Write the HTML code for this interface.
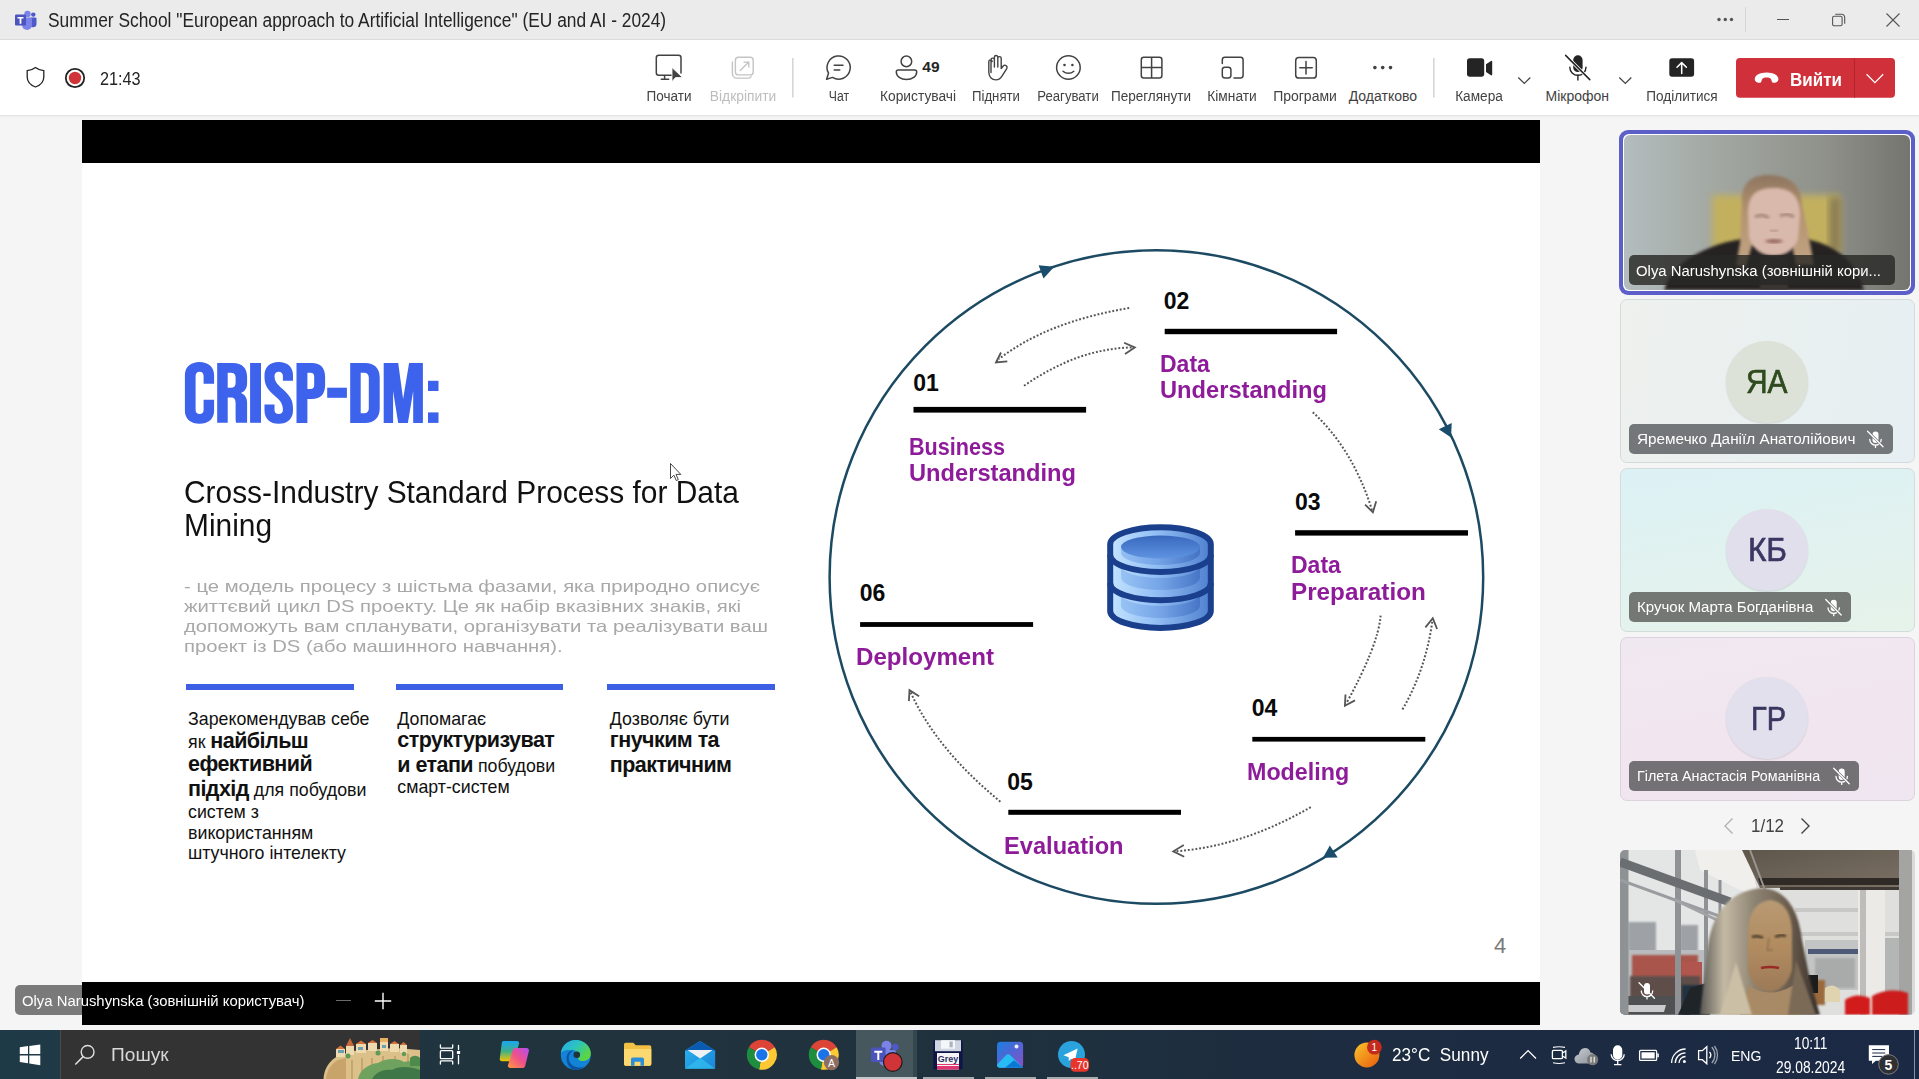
<!DOCTYPE html>
<html><head><meta charset="utf-8">
<style>
*{margin:0;padding:0;box-sizing:border-box}
html,body{width:1919px;height:1079px;overflow:hidden;background:#f5f5f5;font-family:"Liberation Sans",sans-serif;position:relative}
.a{position:absolute}
.t{position:absolute;white-space:nowrap;line-height:1}
svg{position:absolute;overflow:visible}
/* title bar */
#titlebar{left:0;top:0;width:1919px;height:40px;background:#ebebeb;border-bottom:1px solid #dcdcdc}
#toolbar{left:0;top:40px;width:1919px;height:76px;background:#fff;border-bottom:1px solid #e3e3e3}
.lbl{position:absolute;font-size:14px;color:#424242;white-space:nowrap;line-height:1;text-align:center}
</style></head><body>
<!-- TITLE BAR -->
<div id="titlebar" class="a"></div>
<svg style="left:15px;top:10px" width="22" height="20" viewBox="0 0 22 20">
  <circle cx="12.5" cy="4" r="3.2" fill="#7b83eb"/>
  <circle cx="18.3" cy="4.6" r="2.2" fill="#5059c9"/>
  <path d="M15.5 7.5h5a1 1 0 0 1 1 1v5.2a3.5 3.5 0 0 1-3.5 3.5h-.2a3.3 3.3 0 0 1-3.3-3.3z" fill="#5059c9"/>
  <path d="M8 7.5h8a1 1 0 0 1 1 1v6.5a5 5 0 0 1-10 0z" fill="#7b83eb"/>
  <rect x="0" y="4.5" width="11" height="11" rx="1" fill="#4b53bc"/>
  <path d="M2.5 7h6v1.6H6.4v5.2H4.6V8.6H2.5z" fill="#fff"/>
</svg>
<div class="t" style="left:48px;top:10.5px;font-size:19.5px;color:#242424;transform:scaleX(.89);transform-origin:0 0">Summer School "European approach to Artificial Intelligence" (EU and AI - 2024)</div>
<svg style="left:1717px;top:16px" width="20" height="8"><circle cx="2" cy="3.5" r="1.7" fill="#555"/><circle cx="8.3" cy="3.5" r="1.7" fill="#555"/><circle cx="14.5" cy="3.5" r="1.7" fill="#555"/></svg>
<div class="a" style="left:1745px;top:7px;width:1px;height:25px;background:#d6d6d6"></div>
<div class="a" style="left:1777px;top:19px;width:12px;height:1px;background:#555"></div>
<svg style="left:1832px;top:13px" width="14" height="14" viewBox="0 0 14 14"><rect x="0.6" y="3.2" width="9.5" height="9.5" rx="1.5" fill="none" stroke="#555" stroke-width="1.1"/><path d="M3.2 1.2h6.5a3 3 0 0 1 3 3v6.5" fill="none" stroke="#555" stroke-width="1.1"/></svg>
<svg style="left:1886px;top:13px" width="14" height="14" viewBox="0 0 14 14"><path d="M0.5 0.5L13.5 13.5M13.5 0.5L0.5 13.5" stroke="#555" stroke-width="1.1"/></svg>
<!-- TOOLBAR -->
<div id="toolbar" class="a"></div>
<div class="a" style="left:0;top:116px;width:1919px;height:2px;background:linear-gradient(#ececec,#f5f5f5)"></div>
<svg style="left:0;top:0" width="1919" height="115" viewBox="0 0 1919 115">
 <g fill="none" stroke="#242424" stroke-width="1.3">
  <!-- shield -->
  <path d="M35.5 67.5c-2.6 2-5.4 3-8.3 3.2v6.3c0 4.4 2.9 8 8.3 10 5.4-2 8.3-5.6 8.3-10v-6.3c-2.9-.2-5.7-1.2-8.3-3.2z"/>
 </g>
 <circle cx="75" cy="78" r="9.2" fill="none" stroke="#242424" stroke-width="1.8"/>
 <circle cx="75" cy="78" r="6.2" fill="#d13438"/>
 <!-- Почати -->
 <g fill="none" stroke="#424242" stroke-width="1.5" stroke-linecap="round">
  <path d="M672 75.2h-13.2a2.5 2.5 0 0 1-2.5-2.5v-15a2.5 2.5 0 0 1 2.5-2.5h19.7a2.5 2.5 0 0 1 2.5 2.5v15.3"/>
  <path d="M664.6 75.5v3.8M661.3 79.3h7.4"/>
 </g>
 <path d="M672 67.6v14l3.5-4 7-.2z" fill="#424242" stroke="#fff" stroke-width="0.8"/>
 <!-- Відкріпити -->
 <g fill="none" stroke="#c4c4c4" stroke-width="1.4" stroke-linecap="round">
  <rect x="735.4" y="57.3" width="17.8" height="17.6" rx="3"/>
  <path d="M732.4 62v11.5a4.6 4.6 0 0 0 4.6 4.6h11.5a3 3 0 0 0 2.6-1.6"/>
  <path d="M740.2 70.6l8.6-8.5M744 62.1h4.8v4.8"/>
 </g>
 <rect x="792" y="58" width="1.6" height="39.5" fill="#d6d6d6"/>
 <rect x="1433" y="58" width="1.6" height="39.5" fill="#d6d6d6"/>
 <!-- Чат -->
 <g fill="none" stroke="#424242" stroke-width="1.5" stroke-linecap="round">
  <path d="M828.5 73.2a11.6 11.6 0 1 1 4 4.2l-5.9 1.8z" stroke-linejoin="round"/>
  <path d="M834.2 65.2h8.8M834.2 70h5.6"/>
 </g>
 <!-- Користувачі -->
 <g fill="none" stroke="#424242" stroke-width="1.5">
  <circle cx="906.4" cy="61.4" r="5.3"/>
  <path d="M898.2 70h16.6a1.9 1.9 0 0 1 1.9 1.9c0 4.4-4.5 7.6-10.2 7.6s-10.2-3.2-10.2-7.6a1.9 1.9 0 0 1 1.9-1.9z"/>
 </g>
 <!-- hand -->
 <g fill="none" stroke="#424242" stroke-width="1.4" stroke-linejoin="round" stroke-linecap="round">
  <path d="M991 72.5V59.8a1.7 1.7 0 0 1 3.4 0v7.2M994.4 67V57.2a1.7 1.7 0 0 1 3.4 0V67M997.8 67V58.3a1.7 1.7 0 0 1 3.4 0V68.6l2-2.6a2.2 2.2 0 0 1 3.7 2.3l-4.6 7.3c-1.4 2.3-3.4 4.3-6.3 4.3-4.4 0-7.2-3.4-7.2-7.6V61.6a1.7 1.7 0 0 1 3.4 0"/>
 </g>
 <!-- smiley -->
 <g fill="none" stroke="#424242" stroke-width="1.5">
  <circle cx="1068.4" cy="67.5" r="11.8"/>
  <path d="M1063 71.2c3 2.8 7.8 2.8 10.8 0" stroke-linecap="round"/>
 </g>
 <circle cx="1064.5" cy="65" r="1.3" fill="#424242"/><circle cx="1072.4" cy="65" r="1.3" fill="#424242"/>
 <!-- grid -->
 <g fill="none" stroke="#424242" stroke-width="1.5">
  <rect x="1141.3" y="57.3" width="20.6" height="20.6" rx="2.5"/>
  <path d="M1151.6 57.3v20.6M1141.3 67.6h20.6"/>
 </g>
 <!-- rooms -->
 <g fill="none" stroke="#424242" stroke-width="1.5" stroke-linecap="round">
  <path d="M1222.3 63.5v-3.6a2.6 2.6 0 0 1 2.6-2.6h15.6a2.6 2.6 0 0 1 2.6 2.6v15.4a2.6 2.6 0 0 1-2.6 2.6h-6.5"/>
  <rect x="1222.3" y="67.2" width="8.6" height="10.7" rx="2.6"/>
 </g>
 <!-- apps -->
 <g fill="none" stroke="#424242" stroke-width="1.5" stroke-linecap="round">
  <rect x="1295.7" y="57.5" width="20.6" height="20.6" rx="3.2"/>
  <path d="M1306 61.5v12.4M1299.8 67.7h12.4"/>
 </g>
 <circle cx="1374.9" cy="67.6" r="1.8" fill="#424242"/><circle cx="1382.7" cy="67.6" r="1.8" fill="#424242"/><circle cx="1390.5" cy="67.6" r="1.8" fill="#424242"/>
 <!-- camera -->
 <rect x="1467" y="58.2" width="17.2" height="18.6" rx="2.8" fill="#242424"/>
 <path d="M1486 64.2l5-3.3a.8.8 0 0 1 1.2.7v13a.8.8 0 0 1-1.2.6l-5-3.2z" fill="#242424"/>
 <path d="M1518.3 77.5l6 6 6-6" fill="none" stroke="#424242" stroke-width="1.2"/>
 <!-- mic off -->
 <path d="M1573.2 60a4.7 4.7 0 0 1 9.4 0v7.4a4.7 4.7 0 0 1-9.4 0z" fill="#242424"/>
 <g fill="none" stroke="#242424" stroke-width="1.4" stroke-linecap="round">
  <path d="M1569.8 67.2a8.1 8.1 0 0 0 16.2 0"/>
  <path d="M1577.9 75.5v4.6"/>
 </g>
 <path d="M1565.6 55.4l24.2 24.2" stroke="#fff" stroke-width="3.2"/>
 <path d="M1565.6 55.4l24.2 24.2" stroke="#242424" stroke-width="1.5" stroke-linecap="round"/>
 <path d="M1619.3 77.5l6 6 6-6" fill="none" stroke="#424242" stroke-width="1.2"/>
 <!-- share -->
 <rect x="1669.3" y="58.2" width="24.8" height="18.6" rx="2.8" fill="#242424"/>
 <path d="M1681.7 73.6V62.8M1677 67.3l4.7-4.7 4.7 4.7" fill="none" stroke="#fff" stroke-width="1.5" stroke-linecap="round" stroke-linejoin="round"/>
 <!-- leave -->
 <rect x="1736" y="58" width="159" height="39.8" rx="4" fill="#cf3039"/>
 <rect x="1854" y="58" width="1" height="39.8" fill="#b4262d"/>
 <path d="M1756.8 82.2c-1.6-.6-2.4-2.6-1.9-4.3.7-2.6 4.6-5.4 11.7-5.4s11 2.8 11.7 5.4c.5 1.7-.3 3.7-1.9 4.3-1.3.5-3 .9-3.9.3-.9-.7-1-2.7-1.6-3.5-.8-1-2.6-1.4-4.3-1.4s-3.5.4-4.3 1.4c-.6.8-.7 2.8-1.6 3.5-.9.6-2.6.2-3.9-.3z" fill="#fff"/>
 <path d="M1866.6 74.3l8.3 8.3 8.3-8.3" fill="none" stroke="#fff" stroke-width="1.3"/>
</svg>
<div class="t" style="left:100px;top:70.3px;font-size:18.8px;color:#242424;transform:scaleX(.864);transform-origin:0 0">21:43</div>
<div class="t" style="left:922.3px;top:59.3px;font-size:15.5px;font-weight:bold;color:#242424">49</div>
<div class="t" style="left:1789.5px;top:70.6px;font-size:18.3px;font-weight:bold;color:#fff;transform:scaleX(.93);transform-origin:0 0">Вийти</div>
<div class="lbl" style="left:608.8px;top:89px;width:120px;transform:scaleX(.966)">Почати</div>
<div class="lbl" style="left:682.7px;top:89px;width:120px;transform:scaleX(.986);color:#bdbdbd">Відкріпити</div>
<div class="lbl" style="left:778.7px;top:89px;width:120px;transform:scaleX(.874)">Чат</div>
<div class="lbl" style="left:857.5px;top:89px;width:120px;transform:scaleX(.985)">Користувачі</div>
<div class="lbl" style="left:936.3px;top:89px;width:120px;transform:scaleX(.943)">Підняти</div>
<div class="lbl" style="left:1008px;top:89px;width:120px;transform:scaleX(.94)">Реагувати</div>
<div class="lbl" style="left:1091.2px;top:89px;width:120px;transform:scaleX(.967)">Переглянути</div>
<div class="lbl" style="left:1171.6px;top:89px;width:120px;transform:scaleX(.982)">Кімнати</div>
<div class="lbl" style="left:1245px;top:89px;width:120px;transform:scaleX(.999)">Програми</div>
<div class="lbl" style="left:1322.9px;top:89px;width:120px;transform:scaleX(1)">Додатково</div>
<div class="lbl" style="left:1419.2px;top:89px;width:120px;transform:scaleX(.975)">Камера</div>
<div class="lbl" style="left:1517.3px;top:89px;width:120px;transform:scaleX(1)">Мікрофон</div>
<div class="lbl" style="left:1622px;top:89px;width:120px;transform:scaleX(.97)">Поділитися</div>
<!-- SLIDE -->
<div id="slide" class="a" style="left:82px;top:120px;width:1458px;height:905px;background:#000"></div>
<div id="slidewhite" class="a" style="left:82px;top:163px;width:1458px;height:819px;background:#fff"></div>
<svg style="left:0;top:0" width="460" height="440" viewBox="0 0 460 440"><g fill="#3d62eb" fill-rule="evenodd">
<path d="M214.1 383.8V375C214.1 367 208 362 199.5 362C191 362 184.9 367 184.9 375V411C184.9 419 191 423.8 199.5 423.8C208 423.8 214.1 419 214.1 411V399.8H203.6V410C203.6 412.5 202 414.1 199.6 414.1C197.2 414.1 195.6 412.5 195.6 410V375.8C195.6 373.3 197.2 371.7 199.6 371.7C202 371.7 203.6 373.3 203.6 375.8V383.8Z"/>
<path d="M217.2 363H233C242 363 247.1 368 247.1 377V383C247.1 388 245 391.5 241 393C245 394.5 247.1 398 247.1 403V422.8H236C235.6 421 235.6 419 235.6 417V403C235.6 399 234 397.4 231 397.4H227.7V422.8H217.2ZM227.7 372.7H231C234 372.7 235.6 374.3 235.6 377.5V383C235.6 386 234 387.7 231 387.7H227.7Z"/>
<rect x="250.1" y="363" width="10.9" height="59.8"/>
<path d="M293 380.7H282.9V376C282.9 373.3 281.3 371.7 278.7 371.7C276.1 371.7 274.5 373.3 274.5 376C274.5 381 277 384 282 388.5C290 395.5 293 400 293 408.5V410.5C293 418.8 287.5 423.8 278.7 423.8C270 423.8 264.5 418.8 264.5 410.5V404.4H274.5V410C274.5 412.6 276.1 414.1 278.7 414.1C281.3 414.1 282.9 412.6 282.9 410C282.9 404 280.5 400.5 275.5 396.5C267.5 390 264.5 385 264.5 377V375.2C264.5 367 270 362 278.7 362C287.5 362 293 367 293 375.2Z"/>
<path d="M296.5 363.1H312C320.5 363.1 325.1 368 325.1 377V385C325.1 394 320.5 399 312 399H307.4V422.9H296.5ZM307.4 372.8H310.5C313 372.8 314.2 374 314.2 376.8V384.9C314.2 387.7 313 388.9 310.5 388.9H307.4Z"/>
<rect x="327.2" y="387.7" width="19.7" height="10.1"/>
<path d="M350.2 363.1H365C374.5 363.1 379.7 368.5 379.7 377.5V408.5C379.7 417.5 374.5 422.9 365 422.9H350.2ZM360.7 372.8H364C367 372.8 368.8 374.5 368.8 377.5V408.5C368.8 411.5 367 413.2 364 413.2H360.7Z"/>
<path d="M383.7 363.1H398.2L403.1 399L409.1 363.1H422.9V422.9H413.2V391L407.9 422.9H398.2L393.1 391V422.9H383.7Z"/>
<rect x="428" y="380.8" width="10.5" height="10.2"/><rect x="428" y="412.4" width="10.5" height="10.5"/>
</g></svg>
<div class="t" style="left:183.5px;top:475.9px;font-size:31.8px;color:#111;transform:scaleX(.94);transform-origin:0 0;line-height:32.9px">Cross-Industry Standard Process for Data<br>Mining</div>
<div class="t" style="left:183.5px;top:577.3px;font-size:16.5px;color:#a8a8a8;transform:scaleX(1.228);transform-origin:0 0;line-height:19.8px">- це модель процесу з шістьма фазами, яка природно описує<br>життєвий цикл DS проекту. Це як набір вказівних знаків, які<br>допоможуть вам спланувати, організувати та реалізувати ваш<br>проект із DS (або машинного навчання).</div>
<div class="a" style="left:186px;top:684px;width:167.6px;height:6.4px;background:#3d5fe3"></div>
<div class="a" style="left:395.6px;top:684px;width:167.4px;height:6.4px;background:#3d5fe3"></div>
<div class="a" style="left:607px;top:684px;width:168px;height:6.4px;background:#3d5fe3"></div>
<style>.ct{position:absolute;white-space:nowrap;line-height:1;font-size:21.5px;color:#111}.ct .r{font-size:17.8px;font-weight:normal;letter-spacing:0}.ct b{letter-spacing:-.55px}</style>
<div class="ct" style="left:188px;top:708.1px"><span class="r">Зарекомендував себе</span></div>
<div class="ct" style="left:188px;top:730.5px"><span class="r">як </span><b>найбільш</b></div>
<div class="ct" style="left:188px;top:754.1px"><b>ефективний</b></div>
<div class="ct" style="left:188px;top:779.3px"><b>підхід</b><span class="r"> для побудови</span></div>
<div class="ct" style="left:188px;top:801.4px"><span class="r">систем з</span></div>
<div class="ct" style="left:188px;top:821.9px"><span class="r">використанням</span></div>
<div class="ct" style="left:188px;top:841.6px"><span class="r">штучного інтелекту</span></div>
<div class="ct" style="left:397.3px;top:707.9px"><span class="r">Допомагає</span></div>
<div class="ct" style="left:397.3px;top:730.4px"><b>структуризуват</b></div>
<div class="ct" style="left:397.3px;top:754.9px"><b>и етапи</b><span class="r"> побудови</span></div>
<div class="ct" style="left:397.3px;top:775.8px"><span class="r">смарт-систем</span></div>
<div class="ct" style="left:609.8px;top:707.9px"><span class="r">Дозволяє бути</span></div>
<div class="ct" style="left:609.8px;top:730.4px"><b>гнучким та</b></div>
<div class="ct" style="left:609.8px;top:754.9px"><b>практичним</b></div>
<div class="t" style="left:1494px;top:934.5px;font-size:22px;color:#7a7a7a">4</div>
<!-- diagram -->
<svg style="left:0;top:0" width="1919" height="1079" viewBox="0 0 1919 1079">
 <defs>
  <linearGradient id="dbg" x1="0" x2="1" y1="0" y2="0"><stop offset="0" stop-color="#c4e4ff"/><stop offset=".45" stop-color="#93bff5"/><stop offset="1" stop-color="#4f80cf"/></linearGradient>
  <linearGradient id="dbt" x1="0" x2="0" y1="0" y2="1"><stop offset="0" stop-color="#3868bd"/><stop offset="1" stop-color="#5f94e2"/></linearGradient><linearGradient id="dbi" x1="0" x2="1" y1="0" y2="0"><stop offset="0" stop-color="#8ab8f2"/><stop offset=".5" stop-color="#6b9be2"/><stop offset="1" stop-color="#3e6cc0"/></linearGradient>
 </defs>
 <circle cx="1156.4" cy="577" r="326.8" fill="none" stroke="#1b4a62" stroke-width="2.5"/>
 <g fill="#1a4c6c">
  <path d="M1038.6 265.3L1043.5 278.6L1054.2 266.7z"/>
  <path d="M1438.8 429.3L1451.7 423.1L1451.1 437.4z"/>
  <path d="M1329.8 845.4L1337.7 857.4L1323 857.7z"/>
 </g>
 <g fill="#000">
  <rect x="913.5" y="406.9" width="172.6" height="5.7"/>
  <rect x="1164.7" y="328.8" width="172.4" height="5.4"/>
  <rect x="1295.1" y="530.2" width="172.9" height="5.4"/>
  <rect x="860.1" y="622.1" width="173" height="4.8"/>
  <rect x="1252.3" y="736.9" width="173" height="4.7"/>
  <rect x="1008.3" y="809.8" width="172.7" height="5"/>
 </g>
 <g fill="none" stroke="#555" stroke-width="2" stroke-dasharray="1.9 1.9">
  <path d="M1129.2 308Q1046.6 322 999 359"/>
  <path d="M1024 385.8Q1078 348.4 1132 347.4"/>
  <path d="M1312.8 412.2Q1352.75 448.95 1372 510"/>
  <path d="M1380.6 615.7Q1378.25 645.3 1346 704"/>
  <path d="M1402.5 709.4Q1425.75 669.75 1432.5 620"/>
  <path d="M1310.8 807.1Q1241.95 846.8 1175 851.3"/>
  <path d="M1000.4 801.7Q936.25 749.05 910.5 692"/>
 </g>
 <g fill="none" stroke="#555" stroke-width="1.8" stroke-linejoin="miter">
  <path d="M1001 352.5L996 362.5L1007.3 361.3"/>
  <path d="M1124.1 342.7L1134.8 347.4L1125 353.9"/>
  <path d="M1365.1 504.6L1372.9 512.3L1376.2 501.2"/>
  <path d="M1345.5 694.5L1344.9 705.7L1355 700.4"/>
  <path d="M1425.4 627.4L1432.8 618.3L1437.1 629"/>
  <path d="M1183.8 845L1173.3 851.3L1184.2 856.7"/>
  <path d="M908.9 701.1L909.5 690.2L919.1 696.3"/>
 </g>
 <!-- database -->
 <g>
  <path d="M1110.2 544.3A50.3 17 0 0 1 1210.8 544.3V610.9A50.3 17 0 0 1 1110.2 610.9z" fill="url(#dbg)"/>
  <path d="M1121 547V553A39.5 12 0 0 0 1200 553V547z" fill="url(#dbi)" opacity=".8"/>
  <ellipse cx="1160.5" cy="547" rx="39.5" ry="11.5" fill="url(#dbt)"/>
  <path d="M1121 566A39.5 12 0 0 0 1200 566V578A39.5 12 0 0 1 1121 578z" fill="url(#dbi)" opacity=".7"/>
  <path d="M1121 594A39.5 12 0 0 0 1200 594V606A39.5 12 0 0 1 1121 606z" fill="url(#dbi)" opacity=".7"/>
  <g fill="none" stroke="#1a3f8c" stroke-width="6">
   <path d="M1110.2 544.3A50.3 17 0 0 1 1210.8 544.3V610.9A50.3 17 0 0 1 1110.2 610.9z"/>
   <path d="M1110.2 555A50.3 17 0 0 0 1210.8 555"/>
   <path d="M1110.2 583.2A50.3 17 0 0 0 1210.8 583.2"/>
  </g>
 </g>
 <!-- cursor -->
 <path d="M670.5 463.5v15l3.4-3.3 2.4 5.4 2-0.9-2.3-5.3h4.8z" fill="#fff" stroke="#333" stroke-width="0.9"/>
</svg>
<style>.nm{position:absolute;white-space:nowrap;line-height:1;font-size:23px;font-weight:bold;color:#0a0a0a}.st{position:absolute;white-space:nowrap;line-height:1;font-size:24.5px;font-weight:bold;color:#8e1b99;transform-origin:0 0}</style>
<div class="nm" style="left:913.2px;top:372.0px">01</div>
<div class="st" style="left:909.3px;top:434.8px;transform:scaleX(0.882)">Business</div>
<div class="st" style="left:909.3px;top:460.7px;transform:scaleX(0.966)">Understanding</div>
<div class="nm" style="left:1163.8px;top:289.8px">02</div>
<div class="st" style="left:1159.9px;top:351.6px;transform:scaleX(0.939)">Data</div>
<div class="st" style="left:1159.9px;top:377.7px;transform:scaleX(0.966)">Understanding</div>
<div class="nm" style="left:1295.0px;top:491.2px">03</div>
<div class="st" style="left:1290.5px;top:553.3px;transform:scaleX(0.939)">Data</div>
<div class="st" style="left:1290.5px;top:579.5px;transform:scaleX(0.990)">Preparation</div>
<div class="nm" style="left:859.7px;top:582.3px">06</div>
<div class="st" style="left:855.5px;top:645.0px;transform:scaleX(0.984)">Deployment</div>
<div class="nm" style="left:1251.8px;top:697.3px">04</div>
<div class="st" style="left:1247.4px;top:759.7px;transform:scaleX(0.950)">Modeling</div>
<div class="nm" style="left:1007.3px;top:771.0px">05</div>
<div class="st" style="left:1003.7px;top:833.7px;transform:scaleX(0.965)">Evaluation</div>
<!-- RIGHT PANEL -->
<style>
.tile{position:absolute;left:1619.5px;width:295px;border-radius:7px;border:1px solid #d3dbdd;overflow:hidden}
.pill{position:absolute;height:30px;border-radius:5px;background:rgba(90,93,95,.85)}
.pn{position:absolute;white-space:nowrap;line-height:1;font-size:15.4px;color:#fff;transform-origin:0 0}
.av{position:absolute;width:82px;height:82px;border-radius:50%;box-shadow:0 1px 2px rgba(0,0,0,.12)}
.avt{position:absolute;white-space:nowrap;line-height:1;font-size:33.9px;transform-origin:0 0;-webkit-text-stroke:.7px currentColor}
</style>
<!-- tile1 video -->
<div class="a" style="left:1619px;top:130px;width:296px;height:165px;border-radius:9px;background:#5b5fc7"></div>
<div class="a" style="left:1623px;top:134px;width:288px;height:157px;border-radius:6px;background:#fff"></div>
<svg style="left:1624px;top:135px" width="286" height="155" viewBox="0 0 286 155">
 <defs>
  <linearGradient id="v1bg" x1="0" x2="1" y1="0" y2="0"><stop offset="0" stop-color="#b3bdbe"/><stop offset=".3" stop-color="#a3a9a3"/><stop offset=".7" stop-color="#8f918a"/><stop offset="1" stop-color="#74756f"/></linearGradient>
  <linearGradient id="hair1" x1="0" x2="0" y1="0" y2="1"><stop offset="0" stop-color="#8e7560"/><stop offset=".4" stop-color="#b39270"/><stop offset="1" stop-color="#c2a584"/></linearGradient>
  <filter id="bl1" x="-20%" y="-20%" width="140%" height="140%"><feGaussianBlur stdDeviation="3.5"/></filter>
  <filter id="bl2"><feGaussianBlur stdDeviation="1.6"/></filter>
  <clipPath id="c1"><rect width="286" height="155" rx="6"/></clipPath>
 </defs>
 <g clip-path="url(#c1)">
 <rect width="286" height="155" fill="url(#v1bg)"/>
 <rect x="88" y="60" width="128" height="58" fill="#c2b05e" filter="url(#bl1)"/>
 <rect x="205" y="62" width="12" height="55" fill="#8c7e55" filter="url(#bl1)"/>
 <path d="M40 155C48 128 80 110 118 104L182 104C212 110 232 126 240 155z" fill="#272120" filter="url(#bl2)"/>
 <path d="M118 70C116 50 126 40 144 40C168 40 178 52 178 70L186 108L190 130L172 130L168 110L128 110L122 132L112 130L116 108z" fill="url(#hair1)" filter="url(#bl2)"/>
 <path d="M124 78C124 60 132 53 150 53C168 53 176 62 176 80L174 104C170 116 160 121 150 121C138 121 128 114 125 102z" fill="#d9b9ab" filter="url(#bl2)"/>
 <path d="M131 82q7-4 14 1M156 81q7-4 14 1" stroke="#9c7c72" stroke-width="2.5" fill="none" filter="url(#bl2)"/>
 <path d="M146 95q4 3 8 0" stroke="#b08a80" stroke-width="2" fill="none" filter="url(#bl2)"/>
 <path d="M140 106q10-4 20 0q-10 5-20 0z" fill="#9a6a60" filter="url(#bl2)"/>
 <path d="M136 122h28v33h-28z" fill="#3a3432" filter="url(#bl2)"/>
 </g>
</svg>
<div class="pill" style="left:1629px;top:255px;width:266px;height:30px;background:rgba(40,40,38,.82)"></div>
<div class="pn" style="left:1636.2px;top:262.5px;transform:scaleX(.967)">Olya Narushynska (зовнішній кори...</div>
<!-- tile2 -->
<div class="tile" style="top:299.3px;height:164.2px;background:linear-gradient(100deg,#eef1ee 0%,#e9f0f0 60%,#e6eff3 100%)"></div>
<div class="av" style="left:1726px;top:340.5px;background:#dde2d9"></div>
<div class="avt" style="left:1745.5px;top:364.6px;color:#2f4a1f;transform:scaleX(.883)">ЯА</div>
<div class="pill" style="left:1629px;top:424px;width:264px;background:#737779"></div>
<div class="pn" style="left:1636.5px;top:430.9px;transform:scaleX(.995)">Яремечко Даніїл Анатолійович</div>
<!-- tile3 -->
<div class="tile" style="top:468.3px;height:163.5px;background:linear-gradient(170deg,#dcf1f5 0%,#e2f2ee 60%,#e6f3ea 100%)"></div>
<div class="av" style="left:1726px;top:509px;background:#e2dfec"></div>
<div class="avt" style="left:1748.3px;top:533.2px;color:#3b3764;transform:scaleX(.93)">КБ</div>
<div class="pill" style="left:1629.4px;top:592px;width:221.6px;background:#737875"></div>
<div class="pn" style="left:1636.8px;top:599px;transform:scaleX(.977)">Кручок Марта Богданівна</div>
<!-- tile4 -->
<div class="tile" style="top:636.5px;height:164px;background:linear-gradient(170deg,#f0e8f1 0%,#f1e6ef 60%,#efe6f1 100%);border-color:#dcd3dc"></div>
<div class="av" style="left:1726px;top:677px;background:#e3e0ee"></div>
<div class="avt" style="left:1750.5px;top:702px;color:#39365f;transform:scaleX(.854)">ГР</div>
<div class="pill" style="left:1629.4px;top:761px;width:229.2px;background:#737174"></div>
<div class="pn" style="left:1636.8px;top:768px;transform:scaleX(.929)">Гілета Анастасія Романівна</div>
<svg style="left:0;top:0" width="1919" height="1079" viewBox="0 0 1919 1079">
 <g fill="none" stroke="#fff" stroke-width="1.3" stroke-linecap="round">
  <g id="mic1">
   <path d="M1872.5 434.5a3 3 0 0 1 6 0v5.5a3 3 0 0 1-6 0z" fill="#fff" stroke="none"/>
   <path d="M1869.8 439.5a5.7 5.7 0 0 0 11.4 0M1875.5 445.2v2.2"/>
   <path d="M1867.5 431.2l15.5 15.5" stroke="#737779" stroke-width="2.6"/>
   <path d="M1867.5 431.2l15.5 15.5"/>
  </g>
  <g transform="translate(-41.8 168.3)">
   <path d="M1872.5 434.5a3 3 0 0 1 6 0v5.5a3 3 0 0 1-6 0z" fill="#fff" stroke="none"/>
   <path d="M1869.8 439.5a5.7 5.7 0 0 0 11.4 0M1875.5 445.2v2.2"/>
   <path d="M1867.5 431.2l15.5 15.5" stroke="#737875" stroke-width="2.6"/>
   <path d="M1867.5 431.2l15.5 15.5"/>
  </g>
  <g transform="translate(-33.8 337)">
   <path d="M1872.5 434.5a3 3 0 0 1 6 0v5.5a3 3 0 0 1-6 0z" fill="#fff" stroke="none"/>
   <path d="M1869.8 439.5a5.7 5.7 0 0 0 11.4 0M1875.5 445.2v2.2"/>
   <path d="M1867.5 431.2l15.5 15.5" stroke="#737174" stroke-width="2.6"/>
   <path d="M1867.5 431.2l15.5 15.5"/>
  </g>
 </g>
 <!-- pagination -->
 <path d="M1732.5 818.5l-7.5 7.5 7.5 7.5" fill="none" stroke="#b0b0b0" stroke-width="1.3"/>
 <path d="M1801.5 818.5l7.5 7.5-7.5 7.5" fill="none" stroke="#424242" stroke-width="1.4"/>
</svg>
<div class="t" style="left:1750.5px;top:817.2px;font-size:18px;color:#424242;transform:scaleX(.942);transform-origin:0 0">1/12</div>
<!-- tile5 video -->
<svg style="left:1620px;top:850px" width="295" height="165" viewBox="0 0 295 165">
 <defs>
  <clipPath id="c5"><rect width="295" height="164.7" rx="5"/></clipPath>
  <linearGradient id="ceil" x1="0" x2="1" y1="0" y2="1"><stop offset="0" stop-color="#5f564b"/><stop offset="1" stop-color="#7a7064"/></linearGradient>
  <linearGradient id="hair5" x1="0" x2="1"><stop offset="0" stop-color="#5a5854"/><stop offset=".2" stop-color="#c4baa4"/><stop offset=".45" stop-color="#8e8474"/><stop offset=".75" stop-color="#6a5c4c"/><stop offset="1" stop-color="#352e2a"/></linearGradient>
  <linearGradient id="face5" x1="0" x2="0" y1="0" y2="1"><stop offset="0" stop-color="#b89a74"/><stop offset=".5" stop-color="#b28c60"/><stop offset="1" stop-color="#9c7a58"/></linearGradient>
  <filter id="bl5"><feGaussianBlur stdDeviation="0.9"/></filter>
  <filter id="bl6"><feGaussianBlur stdDeviation="1.5"/></filter>
 </defs>
 <g clip-path="url(#c5)">
  <rect width="295" height="165" fill="#d9dada"/>
  <!-- left windows: sky & city -->
  <rect x="0" y="0" width="130" height="165" fill="#e4e6e6"/>
  <path d="M8 72h28v30H8zM60 75h18v30H60z" fill="#9ea2a6" filter="url(#bl5)"/>
  <path d="M0 100H130V150H0z" fill="#b9bcbe"/>
  <path d="M12 105H78V128H12z" fill="#a9544c" filter="url(#bl5)"/>
  <path d="M62 112H82V140H62z" fill="#b0564e"/>
  <path d="M10 126H80V150H10z" fill="#5e4e4a" filter="url(#bl5)"/>
  <path d="M0 146H70V165H0z" fill="#4e5052"/>
  <path d="M2 155H46L44 162H2z" fill="#c9cbcc"/>
  <path d="M62 135H88V165H62z" fill="#243040" filter="url(#bl5)"/>
  <!-- white ceiling slope -->
  <path d="M75 0H128L138 45L120 40L80 20z" fill="#f0efec"/>
  <!-- window frames -->
  <g stroke="#8f9294" fill="none">
   <path d="M4 0V165" stroke-width="9"/>
   <path d="M58 0V165" stroke-width="6"/>
   <path d="M86 20V150" stroke-width="4"/>
   <path d="M100 30V140" stroke-width="3"/>
   <path d="M0 12L110 52" stroke="#6b6e70" stroke-width="9"/>
   <path d="M0 30L110 70" stroke="#9a9d9f" stroke-width="3"/>
   <path d="M55 50L118 80" stroke="#a0a3a5" stroke-width="3"/>
  </g>
  <!-- ceiling -->
  <path d="M122 0H281V38H140z" fill="url(#ceil)"/>
  <path d="M138 28H281V35H140z" fill="#2f2a26"/>
  <path d="M160 37H281V41H160z" fill="#3e3934"/>
  <path d="M130 0L145 40" stroke="#9a9590" stroke-width="2"/>
  <!-- right interior -->
  <path d="M140 40H281V165H140z" fill="#dfe0de"/>
  <path d="M175 58H255V62H175zM175 82H290V86H175z" fill="#c8c9c7"/>
  <path d="M185 90H240V140H185z" fill="#c3c5c4"/>
  <path d="M188 99H240V104H188z" fill="#4d5a78"/>
  <path d="M195 108h40v30h-40z" fill="#a9abab" filter="url(#bl5)"/>
  <path d="M238 40H265V165H238z" fill="#ebeae7"/>
  <path d="M240 40h6v125h-6z" fill="#bfbdb9"/>
  <path d="M265 88H285V150H265z" fill="#b4b6b6"/>
  <path d="M279 0H292V165H279z" fill="#a4a5a2"/>
  <path d="M175 130H205V155H175z" fill="#9a6a3e" filter="url(#bl5)"/>
  <path d="M188 125h10v18h-10z" fill="#1c1c1c"/>
  <path d="M205 138q8-6 15 2v12h-15z" fill="#e0d4b0"/>
  <path d="M225 150Q236 142 250 148V165H225z" fill="#d21a1a" filter="url(#bl5)"/>
  <path d="M252 146Q270 137 288 143V165H252z" fill="#cc1a1d" filter="url(#bl5)"/>
  <!-- woman -->
  <path d="M58 165L70 138L90 132V165z" fill="#1e2428"/>
  <path d="M80 165L88 95Q96 42 142 38Q176 40 182 90L190 130L200 165z" fill="url(#hair5)" filter="url(#bl5)"/>
  <path d="M128 80Q130 52 150 50Q170 52 172 80L172 120Q166 140 150 142Q132 140 128 120z" fill="url(#face5)" filter="url(#bl5)"/>
  <path d="M132 87q6-2 11 1M155 87q6-3 11-1" stroke="#4a3a2c" stroke-width="2.4" fill="none" filter="url(#bl5)"/>
  <path d="M149 88l-2 12h6" stroke="#8e6e50" stroke-width="1.5" fill="none" filter="url(#bl5)"/>
  <path d="M141 118q9-2 18 0" stroke="#9a2a26" stroke-width="2.6" fill="none"/>
  <path d="M80 0H120L130 30L138 45" fill="none"/>
  <path d="M120 165L128 135Q150 150 174 135L180 165z" fill="#a88a66"/>
  <path d="M100 165L116 112L132 165z" fill="#cbbfa6" filter="url(#bl5)"/><path d="M168 165L176 110L196 165z" fill="#7a6a56" filter="url(#bl5)"/>
 </g>
 <g stroke="#fff" stroke-width="1.3" fill="none" stroke-linecap="round">
  <path d="M24 136a3 3 0 0 1 6 0v5.5a3 3 0 0 1-6 0z" fill="#fff" stroke="none"/>
  <path d="M21.3 141a5.7 5.7 0 0 0 11.4 0M27 146.7v2.2"/>
  <path d="M19 132.7l15.5 15.5"/>
 </g>
</svg>
<!-- TASKBAR -->
<!-- bottom name pill -->
<div class="a" style="left:15px;top:985px;width:67px;height:30px;border-radius:5px 0 0 5px;background:#7a7a7a"></div>
<div class="t" style="left:22.3px;top:992.7px;font-size:15.4px;color:#fff;transform:scaleX(.966);transform-origin:0 0">Olya Narushynska (зовнішній користувач)</div>
<div class="a" style="left:336px;top:999.5px;width:15px;height:1.3px;background:#6b6b6b"></div>
<svg style="left:374px;top:991.5px" width="18" height="18"><path d="M9 .8v16.4M.8 9h16.4" stroke="#fff" stroke-width="1.4"/></svg>
<div id="taskbar" class="a" style="left:0;top:1030px;width:1919px;height:49px;background:linear-gradient(90deg,#1f3a47 0%,#20343e 25%,#1f313d 50%,#1d2c40 70%,#1b2945 100%)"></div>
<div class="a" style="left:60px;top:1030px;width:360px;height:49px;background:#333;border-left:1px solid #4a4a4a"></div>
<div class="a" style="left:856px;top:1030px;width:56.5px;height:49px;background:#46575e"></div>
<div class="a" style="left:912.5px;top:1030px;width:4px;height:49px;background:#36464e"></div>
<div class="a" style="left:856px;top:1077px;width:61px;height:2px;background:#c4c8ca"></div>
<div class="a" style="left:923px;top:1077px;width:51px;height:2px;background:#a7acaf"></div>
<div class="a" style="left:985px;top:1077px;width:51px;height:2px;background:#a7acaf"></div>
<div class="a" style="left:1047px;top:1077px;width:51px;height:2px;background:#a7acaf"></div>
<div class="a" style="left:1914px;top:1030px;width:1px;height:49px;background:#8a93a3"></div>
<div class="t" style="left:110.5px;top:1046.3px;font-size:18.75px;color:#d8d8d8;transform:scaleX(1.02);transform-origin:0 0">Пошук</div>
<div class="t" style="left:1392.3px;top:1047.3px;font-size:17.7px;color:#fff;transform:scaleX(.97);transform-origin:0 0">23°C&nbsp;&nbsp;Sunny</div>
<div class="t" style="left:1731px;top:1047.9px;font-size:15.1px;color:#fff;transform:scaleX(.93);transform-origin:0 0">ENG</div>
<div class="t" style="left:1793.5px;top:1036.2px;font-size:15.8px;color:#fff;transform:scaleX(.87);transform-origin:0 0">10:11</div>
<div class="t" style="left:1776.2px;top:1059.8px;font-size:15.8px;color:#fff;transform:scaleX(.875);transform-origin:0 0">29.08.2024</div>
<svg style="left:0;top:1030px" width="1919" height="49" viewBox="0 1030 1919 49">
 <defs>
  <linearGradient id="sun" x1="0" y1="0" x2="1" y2="1"><stop offset="0" stop-color="#f7c62c"/><stop offset="1" stop-color="#ea5a0c"/></linearGradient>
  <linearGradient id="mail" x1="0" y1="0" x2="1" y2="1"><stop offset="0" stop-color="#2ab5f0"/><stop offset="1" stop-color="#1a86d8"/></linearGradient>
  <linearGradient id="edge" x1="0" y1="1" x2="1" y2="0"><stop offset="0" stop-color="#0c59a4"/><stop offset=".5" stop-color="#1ea0e0"/><stop offset="1" stop-color="#54d64a"/></linearGradient>
  <linearGradient id="copl" x1="0" y1="0" x2="0" y2="1"><stop offset="0" stop-color="#1aa6f0"/><stop offset=".5" stop-color="#3fb08a"/><stop offset="1" stop-color="#f5c400"/></linearGradient><linearGradient id="copr" x1="1" y1="0" x2="0" y2="1"><stop offset="0" stop-color="#b04ef2"/><stop offset=".5" stop-color="#f0508a"/><stop offset="1" stop-color="#ff9a3a"/></linearGradient><linearGradient id="edge2" x1="0" y1="0" x2="1" y2=".6"><stop offset="0" stop-color="#2aa8e8"/><stop offset=".5" stop-color="#2bc4c0"/><stop offset="1" stop-color="#5ed63c"/></linearGradient>
  <linearGradient id="pho" x1="0" y1="0" x2="1" y2="1"><stop offset="0" stop-color="#1a7de0"/><stop offset="1" stop-color="#8a4ec8"/></linearGradient>
  <linearGradient id="cloud" x1="0" y1="0" x2="1" y2="1"><stop offset="0" stop-color="#c8ccd2"/><stop offset="1" stop-color="#8a9098"/></linearGradient>
 </defs>
 <!-- windows logo -->
 <path d="M19.8 1047.3L28 1046.1V1054.1H19.8zM29.3 1045.9L40.3 1044.4V1054.1H29.3zM19.8 1055.4H28V1063.3L19.8 1062.1zM29.3 1055.4H40.3V1065.2L29.3 1063.6z" fill="#fff"/>
 <!-- search icon -->
 <circle cx="87.6" cy="1051.9" r="6.4" fill="none" stroke="#e0e0e0" stroke-width="1.4"/>
 <path d="M83.2 1056.6L75.3 1064.5" stroke="#e0e0e0" stroke-width="1.5"/>
 <!-- illustration -->
 <g>
  <path d="M323.5 1079C324 1068 330 1060 338 1056L352 1051L395 1048L420 1050V1079z" fill="#dcc089"/>
  <path d="M326 1079C327 1070 331 1064 338 1060L346 1058V1079z" fill="#c9a46a"/>
  <path d="M352 1060v19M362 1058v21M372 1058v14M383 1056v12M395 1056v10M408 1054v10" stroke="#b8945c" stroke-width="1.2"/>
  <path d="M358 1079C360 1070 368 1064 378 1063C386 1058 398 1058 404 1062C412 1060 420 1062 420 1062V1079z" fill="#6fa25e"/>
  <path d="M372 1079C376 1072 384 1069 392 1070C398 1066 410 1066 420 1070V1079z" fill="#3f7748"/>
  <path d="M410 1058c3-3 7-3 10 0v8h-10z" fill="#4e8a4c"/>
  <path d="M336 1049h9v8h-9zM346 1046h8v9h-8zM356 1044h10v9h-10zM368 1043h9v8h-9zM380 1042h8v9h-8zM390 1044h9v8h-9zM400 1045h7v8h-7z" fill="#efd9ae"/>
  <path d="M336 1049l4.5-3.5 4.5 3.5zM356 1044l5-3.5 5 3.5zM368 1043l4.5-3 4.5 3zM390 1044l4.5-3 4.5 3zM400 1045l3.5-3 3.5 3z" fill="#d4703c"/>
  <path d="M346 1046l4-8 4 8z" fill="#c8683a"/>
  <path d="M380 1042h8v-4h-8z" fill="#e8b060"/>
  <path d="M338 1050h6v3h-6zM358 1047h5v3h-5zM382 1045h4v3h-4z" fill="#6aa0b0"/>
  <circle cx="348" cy="1056" r="2.5" fill="#5e9a5a"/><circle cx="378" cy="1053" r="2.5" fill="#5e9a5a"/><circle cx="404" cy="1054" r="2.2" fill="#5e9a5a"/>
 </g>
 <!-- task view -->
 <g fill="none" stroke="#fff" stroke-width="1.3" stroke-linecap="round">
  <path d="M440.4 1045v2.3a.9.9 0 0 0 .9.9h10.5a.9.9 0 0 0 .9-.9V1045"/>
  <rect x="440.4" y="1050.6" width="12.3" height="8" rx=".9"/>
  <path d="M440.4 1064v-2.3a.9.9 0 0 1 .9-.9h10.5a.9.9 0 0 1 .9.9v2.3"/>
  <path d="M458.5 1045.4v4.2M458.5 1055.3v8.5"/>
 </g>
 <rect x="456.9" y="1051" width="3.2" height="3" fill="#fff"/>
 <!-- copilot -->
 <path d="M503.5 1041h13.5c1.5 0 2.5 1.5 2 3l-5 15.5c-.4 1.2-1.4 1.8-2.6 1.8H502c-1.6 0-2.6-1.4-2.2-3l2-15.5c.2-1 .8-1.8 1.7-1.8z" fill="url(#copl)"/>
 <path d="M515.5 1048h11.2c1.6 0 2.6 1.4 2.2 3l-3.8 15.2c-.4 1.1-1.4 1.8-2.6 1.8h-12.5c-1.5 0-2.5-1.5-2-3l5-15.5c.4-1 1.4-1.5 2.5-1.5z" fill="url(#copr)"/>
 <!-- edge -->
 <circle cx="575.8" cy="1054.9" r="15" fill="#1383d8"/>
 <path d="M560.9 1053.5C561.5 1045.5 568 1039.9 575.8 1039.9C584.5 1039.9 590.8 1046.5 590.8 1053.5C590.8 1058.5 587 1061 582.5 1061C579 1061 577 1059 578.5 1056.5C579.5 1055 579 1052 575 1051C569 1049 562 1050 560.9 1053.5z" fill="url(#edge2)"/>
 <path d="M566.5 1058C566.5 1052.5 571 1049.5 575.5 1050C570.5 1051 568 1055 569 1060C570.5 1066 577 1069 584 1066.5C581 1069 578 1069.9 575.8 1069.9C570 1069.9 566.5 1064 566.5 1058z" fill="#0c53a0"/>
 <circle cx="576.8" cy="1054.8" r="3.3" fill="#20343e"/>
 <!-- folder -->
 <path d="M624 1044.5c0-1 .8-1.8 1.8-1.8h7.5l2.5 2.6h13.7c1 0 1.8.8 1.8 1.8v17c0 1-.8 1.8-1.8 1.8H625.8c-1 0-1.8-.8-1.8-1.8z" fill="#f2c043"/>
 <path d="M624 1049h27.3v14.8c0 1-.8 1.8-1.8 1.8H625.8c-1 0-1.8-.8-1.8-1.8z" fill="#fcd970"/>
 <path d="M631 1065.8v-6.5c0-1 .8-1.8 1.8-1.8h9.4c1 0 1.8.8 1.8 1.8v6.5h-3.5v-4h-6v4z" fill="#2a8fd8"/>
 <!-- mail -->
 <path d="M685 1050.5l15.1-9.5 15.1 9.5v17.6c0 .4-.3.7-.7.7h-28.8c-.4 0-.7-.3-.7-.7z" fill="url(#mail)"/>
 <path d="M685 1050.5l15.1-9.5 15.1 9.5z" fill="#0a5bb0"/>
 <path d="M687.5 1050h25.2l-12.6 8.5z" fill="#eef2f5"/>
 <path d="M685 1068.8l15.1-11 15.1 11z" fill="#38c6f4" opacity=".6"/>
 <!-- chrome -->
 <g id="chr">
  <path d="M761.8 1054.8L748.8 1047.3A15 15 0 0 1 774.8 1047.3z" fill="#db4437"/>
  <path d="M761.8 1054.8L774.8 1047.3A15 15 0 0 1 759 1069.5z" fill="#fcc934"/>
  <path d="M761.8 1054.8L759 1069.5A15 15 0 0 1 748.8 1047.3z" fill="#1e8e3e"/>
  <circle cx="761.8" cy="1054.8" r="7.2" fill="#fff"/>
  <circle cx="761.8" cy="1054.8" r="5.7" fill="#1a73e8"/>
 </g>
 <use href="#chr" x="61.9"/>
 <circle cx="831.5" cy="1062.6" r="7.6" fill="#8d6e63"/>
 <text x="831.5" y="1066.6" font-family="Liberation Sans" font-size="10.5" fill="#fff" text-anchor="middle">A</text>
 <!-- teams -->
 <circle cx="886.5" cy="1045.8" r="5" fill="#7b83eb"/>
 <circle cx="895.4" cy="1047" r="3.2" fill="#5059c9"/>
 <path d="M878 1050h16a2 2 0 0 1 2 2v6a9 9 0 0 1-18 0z" fill="#7b83eb"/>
 <rect x="871" y="1047.6" width="14.6" height="14.4" rx="1.2" fill="#4b53bc"/>
 <path d="M874.3 1050.8h8v1.9h-3v7.2h-2v-7.2h-3z" fill="#fff"/>
 <circle cx="892.8" cy="1062" r="9.3" fill="#d13438" stroke="#1c1c1c" stroke-width="1.2"/>
 <!-- grey floppy -->
 <path d="M933.3 1042c0-1.2 1-2.1 2.1-2.1h25c1.2 0 2.2 1 2.2 2.1v25.5c0 1.2-1 2.1-2.2 2.1h-25c-1.2 0-2.1-1-2.1-2.1z" fill="#0e1648"/>
 <rect x="935" y="1040.2" width="26" height="11" fill="#cfd6e2"/>
 <rect x="941" y="1040.2" width="14" height="8.5" fill="#f4f6f8"/>
 <rect x="949.5" y="1041.5" width="3.2" height="5.8" fill="#aab4c4"/>
 <rect x="937" y="1053" width="22" height="16.5" fill="#f6f3f6"/>
 <rect x="937" y="1066" width="22" height="3.5" fill="#e0356e"/>
 <rect x="937" y="1064" width="22" height="1" fill="#e0356e"/>
 <text x="948" y="1062.2" font-family="Liberation Sans" font-weight="bold" font-size="9" fill="#283060" text-anchor="middle">Grey</text>
 <!-- photos -->
 <rect x="997" y="1041.7" width="26.1" height="26" rx="3.5" fill="url(#pho)"/>
 <path d="M997 1064.7l9-9.5c1.3-1.3 3-1.3 4.3 0l12.8 12.5H1000a3 3 0 0 1-3-3z" fill="#27bdf2"/>
 <path d="M1005 1067.7l9-7.5 9.1 7.5z" fill="#0a78d4"/>
 <circle cx="1016.5" cy="1046.4" r="2" fill="#eef"/>
 <!-- telegram -->
 <circle cx="1071.5" cy="1054.5" r="13.5" fill="#2aa3dc"/>
 <path d="M1063.4 1055.2l14.2-6.6-3 13.5-3.4-3.4-2.5 2.2v-3.6l-5.3-2.1z" fill="#fff"/>
 <rect x="1070.5" y="1058.1" width="18.5" height="13.6" rx="4.5" fill="#e8352c"/>
 <text x="1079.8" y="1069.2" font-family="Liberation Sans" font-size="10.5" fill="#fff" text-anchor="middle">..70</text>
 <!-- weather -->
 <circle cx="1366.9" cy="1055" r="12.5" fill="url(#sun)"/>
 <circle cx="1374.4" cy="1047.2" r="7.4" fill="#c42b1c"/>
 <text x="1374.4" y="1051" font-family="Liberation Sans" font-size="10" fill="#fff" text-anchor="middle">1</text>
 <path d="M1520.2 1058.5l7.9-7.9 7.9 7.9" fill="none" stroke="#fff" stroke-width="1.3"/>
 <!-- tray icons -->
 <g fill="none" stroke="#fff" stroke-width="1.3">
  <rect x="1552.4" y="1050.4" width="10" height="8.3" rx="1"/>
  <path d="M1562.4 1053l3.4-2v7l-3.4-2"/>
  <path d="M1553 1047.4a15 8 0 0 1 12 0M1553 1062.8a15 8 0 0 0 12 0" stroke-width="1.1"/>
  <path d="M1611.2 1054.2a6.5 6.5 0 0 0 13 0M1617.7 1060.7v3.6M1614 1064.6h7.4"/>
  <rect x="1639.6" y="1050.4" width="17" height="10" rx="1"/>
  <path d="M1671.6 1063a14 14 0 0 1 14-14M1675.3 1063a10.2 10.2 0 0 1 10.2-10.2M1679 1063a6.5 6.5 0 0 1 6.5-6.5"/>
  <path d="M1698.6 1050.7h3.7l4.5-4v17l-4.5-4h-3.7z"/>
  <path d="M1709.5 1051.8a5 5 0 0 1 0 6.4" />
  <path d="M1711.8 1047a12 12 0 0 1 0 16M1714.5 1046a15 15 0 0 1 0 18" stroke="#9aa2b0"/>
 </g>
 <rect x="1641.5" y="1052.3" width="13.2" height="6.2" fill="#fff"/>
 <rect x="1657.2" y="1053.5" width="1.6" height="3.8" fill="#fff"/>
 <circle cx="1684.4" cy="1061.4" r="1.5" fill="#fff"/>
 <path d="M1613 1050a4.65 4.65 0 0 1 9.3 0v5a4.65 4.65 0 0 1-9.3 0z" fill="#fff"/>
 <path d="M1585 1048c3 0 5 2 5.5 4.5 3 .3 5 2.7 5 5.5 0 3-2.5 5.5-5.5 5.5h-11c-2.5 0-4.5-2-4.5-4.5s2-4.3 4.3-4.5c.6-3.7 3.3-6.5 6.2-6.5z" fill="url(#cloud)"/>
 <circle cx="1592.6" cy="1059.7" r="5.6" fill="#7a7a7a"/>
 <path d="M1591 1056.8v5.8M1594.2 1056.8v5.8" stroke="#fff" stroke-width="1.1"/>
 <!-- notifications -->
 <path d="M1868.8 1045.2h20.2v15.5h-13.2l-3.8 3.3v-3.3h-3.2z" fill="#fff"/>
 <path d="M1872.2 1049.6h13M1872.2 1053h13M1872.2 1056.4h10" stroke="#1b2945" stroke-width="1"/>
 <circle cx="1888.5" cy="1064.4" r="9.8" fill="#2f3033" stroke="#7d7d80" stroke-width="1"/>
 <text x="1888.5" y="1069.7" font-family="Liberation Sans" font-weight="bold" font-size="14" fill="#fff" text-anchor="middle">5</text>
</svg>
</body></html>
